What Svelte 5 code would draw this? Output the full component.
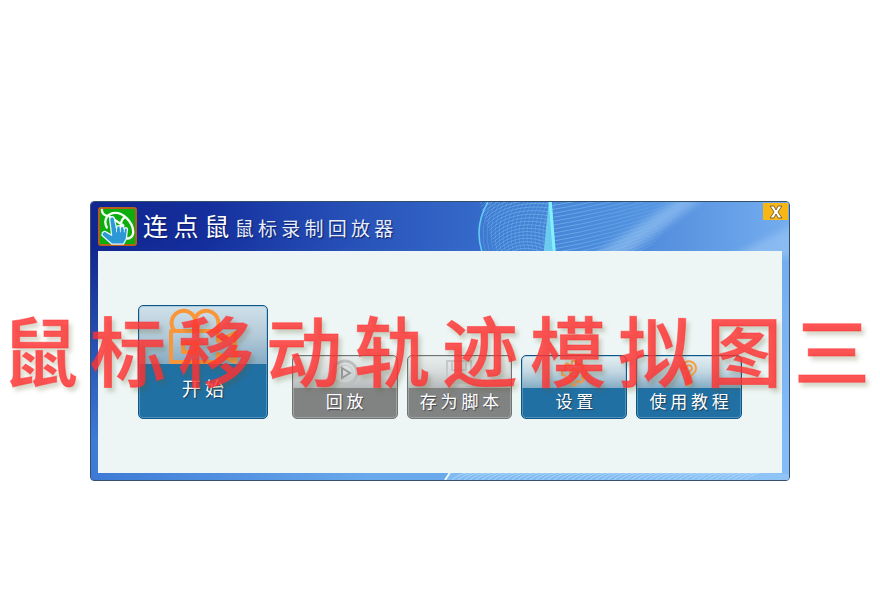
<script>
  const tools = [
    { label: '回 放', icon: 'play', off: true },
    { label: '存 为 脚 本', icon: 'save', off: true },
    { label: '设 置', icon: 'gear', off: false },
    { label: '使 用 教 程', icon: 'help', off: false }
  ];
  const caption = [...'鼠标移动轨迹模拟图三'];

  // sweep lines that rise from the left arc and cross the title bar
  const fan = Array.from({ length: 26 }, (_, i) => {
    const y = i * 4 - 24;
    return `M460 ${y} Q520 ${y - 10} ${640 - i * 3} ${y - 34}`;
  });
  const arcs = Array.from({ length: 18 }, (_, i) =>
    `M${398 + i * 4} 0 Q${384 + i * 4} 26 ${392 + i * 4} 52`
  );
  const swirls = Array.from({ length: 24 }, (_, i) =>
    `M${388 + i} ${i * 3 - 4} Q${410 + i} ${i * 3 - 26} 460 ${i * 4 - 30}`
  );
  const ripples = Array.from({ length: 50 }, (_, i) => `M${362 + i * 6} 280 q8 -7 20 -8`);

  // eight-toothed cog outline
  const cog = Array.from({ length: 8 }, (_, i) => {
    const at = (r, step) => {
      const a = ((i + step) * Math.PI) / 4;
      return `${(14 + r * Math.cos(a)).toFixed(1)} ${(14 + r * Math.sin(a)).toFixed(1)}`;
    };
    return `${i ? 'L' : 'M'}${at(12, -0.2)} L${at(12, 0.2)} L${at(9, 0.35)} L${at(9, 0.65)}`;
  }).join(' ') + 'Z';
</script>

<main>
  <section class="window">
    <svg class="art" viewBox="0 0 700 280" preserveAspectRatio="none" aria-hidden="true">
      <defs>
        <linearGradient id="across">
          <stop offset="0" stop-color="#102690" />
          <stop offset=".16" stop-color="#142e9b" />
          <stop offset=".36" stop-color="#264fb6" />
          <stop offset=".54" stop-color="#3468c8" />
          <stop offset=".75" stop-color="#4a85d9" />
          <stop offset="1" stop-color="#74adef" />
        </linearGradient>
        <linearGradient id="low">
          <stop offset="0" stop-color="#3c7ad6" />
          <stop offset=".4" stop-color="#6aa9ec" />
          <stop offset=".7" stop-color="#68a8eb" />
          <stop offset="1" stop-color="#85bbf7" />
        </linearGradient>
        <linearGradient id="down" x2="0" y2="1">
          <stop offset=".15" stop-color="#fff" stop-opacity="0" />
          <stop offset=".85" stop-color="#fff" />
        </linearGradient>
        <linearGradient id="fadeout" gradientUnits="userSpaceOnUse" x1="460" x2="620">
          <stop offset="0" stop-color="#8fd4f8" />
          <stop offset="1" stop-color="#8fd4f8" stop-opacity="0" />
        </linearGradient>
        <mask id="fade"><rect width="700" height="280" fill="url(#down)" /></mask>
        <filter id="soft"><feGaussianBlur stdDeviation="4" /></filter>
      </defs>
      <rect width="700" height="280" fill="url(#across)" />
      <rect width="700" height="280" fill="url(#low)" mask="url(#fade)" />
      <path d="M398 0 Q382 25 392 50 H530 L600 0Z" fill="#65b3ee" opacity=".2" />
      <path d="M500 56 L590 -4 H615 L535 56Z" fill="#a2cbf5" opacity=".5" filter="url(#soft)" />
      <path d="M640 56 L706 22 V56Z" fill="#a2cbf5" opacity=".5" filter="url(#soft)" />
      <g fill="none" stroke="#86cff7" stroke-width=".7">
        <g opacity=".6">{#each swirls as d}<path {d} />{/each}</g>
        <g opacity=".35">{#each arcs as d}<path {d} />{/each}</g>
      </g>
      <g fill="none" stroke="url(#fadeout)" stroke-width=".8" opacity=".6">
        {#each fan as d}<path {d} />{/each}
      </g>
      <path d="M398 0 Q384 24 392 50" fill="none" stroke="#62ccf6" stroke-width="1.5" />
      <path d="M459 0 h3 L466 50 H454Z" fill="#73d8f4" opacity=".8" />
      <path d="M459 0 h3 L466 50 h-3Z" fill="#80f2ff" />
      <path d="M355 280 L361 271 H650 L700 274 V280Z" fill="#9bcdf8" opacity=".5" />
      <g fill="none" stroke="#c0e5ff" stroke-width=".9" opacity=".7">
        {#each ripples as d}<path {d} />{/each}
      </g>
      <path d="M355 280 L361 271" stroke="#f1f9ff" stroke-width="2" />
    </svg>

    <header>
      <svg class="logo" viewBox="0 0 40 40" aria-hidden="true">
        <rect x="1" y="1" width="38" height="38" rx="2" fill="#0cad0c" stroke="#b7601c" stroke-width="2" />
        <g fill="none" stroke="#f4fff4" stroke-width="2.4" stroke-linecap="round" stroke-linejoin="round">
          <path d="M4 3 C4 7 6 8 9 9" />
          <path d="M9 21 C5 13 10 6 18 6 C26 6 35 15 36 24 C37 31 31 34 27 31" />
          <path d="M12 10 L26 19 M27 11 C23 13 24 17 23 21" />
        </g>
        <path d="M12 13 C12 9 17 9 17 13 L19 22 C19 18 23 18 23 22 C23 19 27 19 27 23 C28 20 31 21 30 25 L29 33 L26 38 H14 L4 29 C4 25 7 24 9 26 L14 29Z" fill="#2c98d6" stroke="#e5f6ff" stroke-width="1.3" stroke-linejoin="round" />
        <path d="M19 22 v4 M23 22 v4 M27 23 v3" stroke="#c6ebfb" stroke-width="1" />
      </svg>
      <h1>连 点 鼠 <small>鼠 标 录 制 回 放 器</small></h1>
      <button class="close" type="button" aria-label="关闭">
        <svg viewBox="0 0 25 16" aria-hidden="true">
          <path d="M7 2h4l2 4 2-4h4l-4 6 4 6h-4l-2-4-2 4H7l4-6z" fill="#fff" stroke="#85642a" stroke-width="1" />
        </svg>
      </button>
    </header>

    <div class="panel">
      <button class="tile start" type="button">
        <svg class="camera" viewBox="0 0 70 58" fill="none" stroke="#fa963a" stroke-width="4" stroke-linejoin="round" aria-hidden="true">
          <path d="M6 23 A12 12 0 1 1 27 12 A12 12 0 1 1 48 23" />
          <path d="M24 21 A12 12 0 0 0 27 12 A12 12 0 0 0 31 21" />
          <path d="M3 55 V24 H50 V34 L67 26 V55 L50 47 V55Z" />
          <rect x="15" y="36" width="13" height="9" />
        </svg>
        <span>开 始</span>
      </button>
      {#each tools as tool}
        <button class="tile" class:off={tool.off} disabled={tool.off} type="button">
          <svg class="glyph" viewBox="0 0 28 28" fill="none" stroke-width="2" aria-hidden="true">
            {#if tool.icon === 'play'}
              <circle cx="14" cy="14" r="12" stroke="#bcbfbf" stroke-width="3" />
              <circle cx="14" cy="14" r="8" stroke="#cdd0d0" />
              <path d="M11 9 L19 14 L11 19Z" stroke="#989a9a" />
            {:else if tool.icon === 'save'}
              <path d="M2 2 H26 V26 H2Z M7 2 V11 H21 V2 M7 26 V17 H21 V26" stroke="#c5c8c8" />
            {:else if tool.icon === 'gear'}
              <path d={cog} stroke="#f8a04e" stroke-linejoin="round" />
              <circle cx="14" cy="14" r="4" stroke="#f8a04e" />
            {:else}
              <path d="M7 9 A7 7 0 1 1 18 15 Q15 17 15 20 H12 Q11 15 15 12 A3 3 0 1 0 11 9Z" stroke="#f5a048" stroke-linejoin="round" />
              <circle cx="13" cy="24" r="2" stroke="#f5a048" />
            {/if}
          </svg>
          <span>{tool.label}</span>
        </button>
      {/each}
    </div>
  </section>
  <p class="caption">{#each caption as char}<span>{char}</span>{/each}</p>
</main>

<style>
  :global(body) {
    margin: 0;
    background: #fff;
  }
  main {
    position: relative;
    box-sizing: border-box;
    padding: 201px 16px 0;
    font-family: 'Noto Sans CJK SC', sans-serif;
  }
  .window {
    position: relative;
    box-sizing: border-box;
    max-width: 700px;
    margin: 0 auto;
    padding: 0 7px 7px;
    border: 1px solid #34506b;
    border-radius: 4px;
    overflow: hidden;
  }
  .art {
    position: absolute;
    inset: 0;
    width: 100%;
    height: 100%;
  }
  header {
    position: relative;
    display: flex;
    align-items: center;
    gap: 6px;
    height: 49px;
  }
  .logo {
    width: 39px;
    height: 39px;
    flex: none;
  }
  h1 {
    margin: 0;
    font-size: 25px;
    line-height: 38px;
    font-weight: 400;
    color: #fff;
    white-space: nowrap;
    text-shadow: 1px 1px 1px #0b1c66;
  }
  small {
    font-size: 19px;
    color: #e6eefa;
  }
  .close {
    position: absolute;
    top: 1px;
    right: -6px;
    width: 25px;
    height: 17px;
    padding: 0;
    border: 0;
    background: #f7b715;
  }
  .close svg {
    display: block;
    width: 25px;
    height: 16px;
  }
  .panel {
    position: relative;
    display: flex;
    align-items: flex-end;
    gap: 9px;
    padding: 54px 40px;
    background: #edf6f5;
  }
  .tile {
    position: relative;
    box-sizing: border-box;
    flex: 0 1 106px;
    height: 64px;
    padding: 0;
    display: flex;
    flex-direction: column;
    align-items: center;
    justify-content: space-between;
    border: 1px solid #0f5687;
    border-radius: 5px;
    background: linear-gradient(#e4eff2, #c2d7e2 16px, #84acc5 32px, #2070a4 32px);
    box-shadow: inset 0 0 0 1px rgba(130, 180, 212, 0.5);
    color: #fff;
    font-family: inherit;
    font-size: 17px;
    line-height: 24px;
    white-space: nowrap;
    text-shadow: 1px 1px 1px rgba(20, 30, 40, 0.6);
  }
  .tile span {
    padding-bottom: 5px;
  }
  .off {
    border-color: #707473;
    background: linear-gradient(#e8eeed, #d7dbdb 16px, #b6b9b9 32px, #818383 32px);
    box-shadow: inset 0 0 0 1px rgba(190, 194, 194, 0.5);
  }
  .start {
    flex-basis: 130px;
    height: 114px;
    margin-right: 15px;
    background: linear-gradient(#cfe0e9, #b3cad9 30px, #86abc3 58px, #2070a4 58px);
    font-size: 19px;
  }
  .start span {
    padding-bottom: 18px;
  }
  .glyph {
    width: 28px;
    height: 28px;
    margin-top: 3px;
  }
  .camera {
    width: 70px;
    height: 58px;
    margin-top: 1px;
  }
  .caption {
    position: absolute;
    top: 296px;
    left: 0;
    right: 0;
    display: flex;
    justify-content: center;
    gap: 12px;
    margin: 0;
    padding-right: 8px;
    font-size: 76px;
    line-height: 104px;
    font-weight: 500;
    color: rgba(255, 50, 50, 0.82);
    -webkit-text-stroke: 1px rgba(255, 50, 50, 0.5);
    filter: drop-shadow(3px 4px 2px rgba(90, 90, 40, 0.3));
    pointer-events: none;
  }
</style>
